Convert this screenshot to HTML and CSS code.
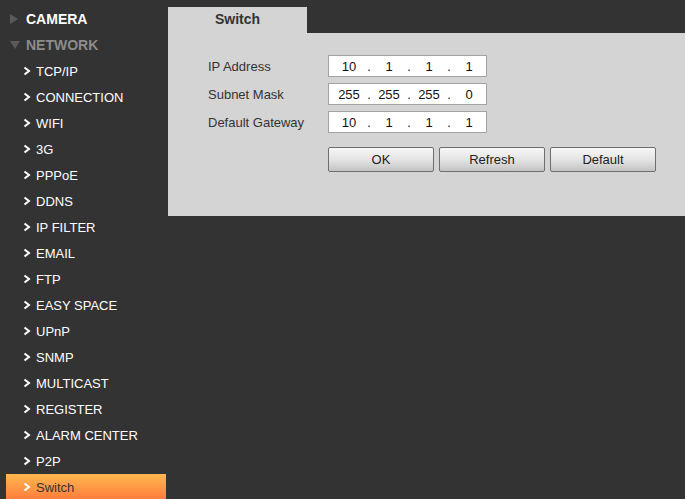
FILE: index.html
```html
<!doctype html>
<html>

<head>
  <title>Network - Switch</title>
  <meta name="viewport" content="width=device-width, initial-scale=1.0">
  <link rel="stylesheet" href="styles.css">
</head>

<body>
  <div class="page">

    <!-- Side Menu -->
    <div class="menu">
      <div class="menu-group">
        <span class="tri tri-right"></span>CAMERA
      </div>
      <div class="menu-group open">
        <span class="tri tri-down"></span>NETWORK
      </div>
      <div class="menu-item"><svg class="chev" width="8" height="10" viewBox="0 0 8 10"><polyline points="1.5,1.5 6,5 1.5,8.5" /></svg>TCP/IP</div>
      <div class="menu-item"><svg class="chev" width="8" height="10" viewBox="0 0 8 10"><polyline points="1.5,1.5 6,5 1.5,8.5" /></svg>CONNECTION</div>
      <div class="menu-item"><svg class="chev" width="8" height="10" viewBox="0 0 8 10"><polyline points="1.5,1.5 6,5 1.5,8.5" /></svg>WIFI</div>
      <div class="menu-item"><svg class="chev" width="8" height="10" viewBox="0 0 8 10"><polyline points="1.5,1.5 6,5 1.5,8.5" /></svg>3G</div>
      <div class="menu-item"><svg class="chev" width="8" height="10" viewBox="0 0 8 10"><polyline points="1.5,1.5 6,5 1.5,8.5" /></svg>PPPoE</div>
      <div class="menu-item"><svg class="chev" width="8" height="10" viewBox="0 0 8 10"><polyline points="1.5,1.5 6,5 1.5,8.5" /></svg>DDNS</div>
      <div class="menu-item"><svg class="chev" width="8" height="10" viewBox="0 0 8 10"><polyline points="1.5,1.5 6,5 1.5,8.5" /></svg>IP FILTER</div>
      <div class="menu-item"><svg class="chev" width="8" height="10" viewBox="0 0 8 10"><polyline points="1.5,1.5 6,5 1.5,8.5" /></svg>EMAIL</div>
      <div class="menu-item"><svg class="chev" width="8" height="10" viewBox="0 0 8 10"><polyline points="1.5,1.5 6,5 1.5,8.5" /></svg>FTP</div>
      <div class="menu-item"><svg class="chev" width="8" height="10" viewBox="0 0 8 10"><polyline points="1.5,1.5 6,5 1.5,8.5" /></svg>EASY SPACE</div>
      <div class="menu-item"><svg class="chev" width="8" height="10" viewBox="0 0 8 10"><polyline points="1.5,1.5 6,5 1.5,8.5" /></svg>UPnP</div>
      <div class="menu-item"><svg class="chev" width="8" height="10" viewBox="0 0 8 10"><polyline points="1.5,1.5 6,5 1.5,8.5" /></svg>SNMP</div>
      <div class="menu-item"><svg class="chev" width="8" height="10" viewBox="0 0 8 10"><polyline points="1.5,1.5 6,5 1.5,8.5" /></svg>MULTICAST</div>
      <div class="menu-item"><svg class="chev" width="8" height="10" viewBox="0 0 8 10"><polyline points="1.5,1.5 6,5 1.5,8.5" /></svg>REGISTER</div>
      <div class="menu-item"><svg class="chev" width="8" height="10" viewBox="0 0 8 10"><polyline points="1.5,1.5 6,5 1.5,8.5" /></svg>ALARM CENTER</div>
      <div class="menu-item"><svg class="chev" width="8" height="10" viewBox="0 0 8 10"><polyline points="1.5,1.5 6,5 1.5,8.5" /></svg>P2P</div>
      <div class="menu-item active"><svg class="chev" width="8" height="10" viewBox="0 0 8 10"><polyline points="1.5,1.5 6,5 1.5,8.5" /></svg>Switch</div>
    </div>

    <!-- Content Area -->
    <div class="content">
      <div class="tabs">
        <div class="tab">Switch</div>
      </div>
      <div class="panel">
        <div class="form-row">
          <label>IP Address</label>
          <div class="ip-box">
            <span class="octet">10</span><span class="dot">.</span>
            <span class="octet">1</span><span class="dot">.</span>
            <span class="octet">1</span><span class="dot">.</span>
            <span class="octet">1</span>
          </div>
        </div>
        <div class="form-row">
          <label>Subnet Mask</label>
          <div class="ip-box">
            <span class="octet">255</span><span class="dot">.</span>
            <span class="octet">255</span><span class="dot">.</span>
            <span class="octet">255</span><span class="dot">.</span>
            <span class="octet">0</span>
          </div>
        </div>
        <div class="form-row">
          <label>Default Gateway</label>
          <div class="ip-box">
            <span class="octet">10</span><span class="dot">.</span>
            <span class="octet">1</span><span class="dot">.</span>
            <span class="octet">1</span><span class="dot">.</span>
            <span class="octet">1</span>
          </div>
        </div>
        <div class="button-row">
          <button class="button">OK</button>
          <button class="button">Refresh</button>
          <button class="button">Default</button>
        </div>
      </div>
    </div>

  </div>
</body>

</html>
```

FILE: styles.css
```css
body {
  background-color: #333333;
  font-family: Helvetica, "Liberation Sans", Arial, sans-serif;
  margin: 0;
  padding: 0;
}

.page {
  display: flex;
  align-items: flex-start;
  height: 499px;
  overflow: hidden;
}

.menu {
  width: 160px;
  padding: 6px 0 0 6px;
  flex-shrink: 0;
}

.menu-group {
  height: 26px;
  display: flex;
  align-items: center;
  font-size: 14px;
  font-weight: bold;
  color: #ffffff;
  padding-left: 4px;
}

.menu-group.open {
  color: #8c8c8c;
}

.tri {
  display: inline-block;
  width: 0;
  height: 0;
  margin-right: 8px;
}

.tri-right {
  border-top: 5px solid transparent;
  border-bottom: 5px solid transparent;
  border-left: 8px solid #5a5a5a;
  margin-right: 8px;
}

.tri-down {
  border-left: 5px solid transparent;
  border-right: 5px solid transparent;
  border-top: 8px solid #5a5a5a;
  margin-right: 6px;
}

.menu-item {
  height: 26px;
  display: flex;
  align-items: center;
  font-size: 13px;
  color: #ffffff;
  padding-left: 17px;
}

.menu-item .chev {
  margin-right: 5px;
  fill: none;
  stroke: #ffffff;
  stroke-width: 2;
}

.menu-item.active {
  background: linear-gradient(to bottom, #ffb84e, #ff7b3c);
  color: #333333;
}

.content {
  flex-grow: 1;
  margin-left: 2px;
  padding-top: 7px;
}

.tabs {
  display: flex;
}

.tab {
  width: 139px;
  height: 26px;
  line-height: 25px;
  background-color: #d4d4d4;
  text-align: center;
  font-size: 14px;
  font-weight: bold;
  color: #333333;
}

.panel {
  background-color: #d4d4d4;
  height: 183px;
  box-sizing: border-box;
  padding: 22px 0 0 40px;
}

.form-row {
  display: flex;
  align-items: center;
  height: 22px;
  margin-bottom: 6px;
}

.form-row label {
  width: 120px;
  font-size: 13px;
  color: #333333;
}

.ip-box {
  width: 159px;
  height: 22px;
  box-sizing: border-box;
  border: 1px solid #a3a3a3;
  background-color: #ffffff;
  display: flex;
  align-items: center;
  padding-left: 5px;
  font-size: 13px;
  color: #111111;
}

.octet {
  width: 30px;
  text-align: center;
}

.dot {
  width: 10px;
  text-align: center;
}

.button-row {
  display: flex;
  gap: 5px;
  margin: 14px 0 0 120px;
}

.button {
  width: 106px;
  height: 25px;
  border: 1px solid #6e6e6e;
  border-radius: 2px;
  background: linear-gradient(to bottom, #f7f7f7, #e4e4e4 50%, #c4c4c4);
  font-family: Helvetica, "Liberation Sans", Arial, sans-serif;
  font-size: 13px;
  color: #222222;
  padding: 0;
  cursor: pointer;
}
```
